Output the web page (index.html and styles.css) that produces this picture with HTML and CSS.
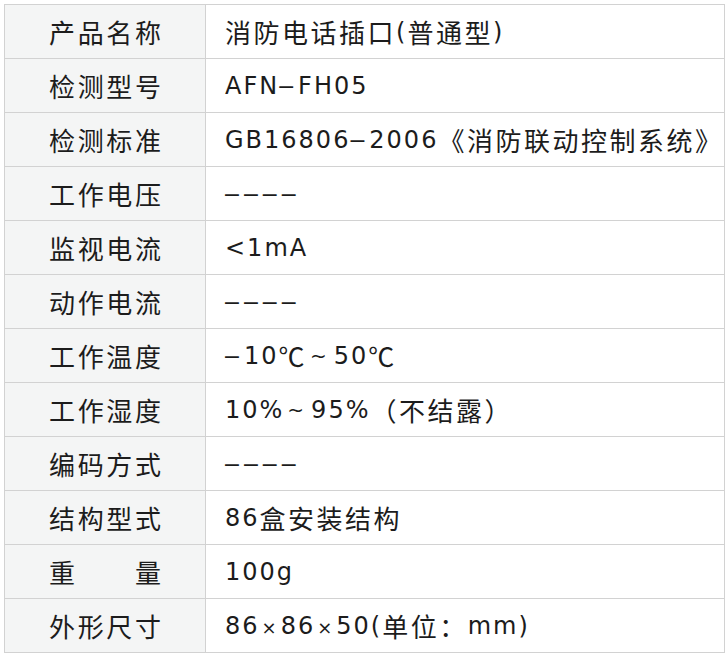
FILE: index.html
```html
<!DOCTYPE html>
<html lang="zh-CN">
<head>
<meta charset="utf-8">
<title>消防电话插口 参数</title>
<link rel="stylesheet" href="styles.css">
</head>
<body>
<div class="spec">
  <div class="label"><span class="lt">产品名称</span></div>
  <div class="value">消防电话插口<span class="lat">(</span>普通型<span class="lat">)</span></div>

  <div class="label"><span class="lt">检测型号</span></div>
  <div class="value"><span class="lat">AFN<span class="dash">–</span>FH05</span></div>

  <div class="label"><span class="lt">检测标准</span></div>
  <div class="value"><span class="lat">GB16806<span class="dash">–</span>2006</span>《消防联动控制系统》</div>

  <div class="label"><span class="lt">工作电压</span></div>
  <div class="value"><span class="dash">––––</span></div>

  <div class="label"><span class="lt">监视电流</span></div>
  <div class="value"><span class="lat">&lt;1mA</span></div>

  <div class="label"><span class="lt">动作电流</span></div>
  <div class="value"><span class="dash">––––</span></div>

  <div class="label"><span class="lt">工作温度</span></div>
  <div class="value"><span class="lat"><span class="dash">–</span>10</span>℃<span class="lat tilde">~</span><span class="lat">50</span>℃</div>

  <div class="label"><span class="lt">工作湿度</span></div>
  <div class="value"><span class="lat">10%</span><span class="lat tilde">~</span><span class="lat">95%</span>（不结露）</div>

  <div class="label"><span class="lt">编码方式</span></div>
  <div class="value"><span class="dash">––––</span></div>

  <div class="label"><span class="lt">结构型式</span></div>
  <div class="value"><span class="lat">86</span>盒安装结构</div>

  <div class="label"><span class="lt">重量</span></div>
  <div class="value"><span class="lat">100g</span></div>

  <div class="label"><span class="lt">外形尺寸</span></div>
  <div class="value"><span class="lat">86<span class="times">×</span>86<span class="times">×</span>50(</span>单位：<span class="lat">mm)</span></div>
</div>
</body>
</html>
```

FILE: styles.css
```css
html, body {
  margin: 0;
  padding: 0;
  background: #ffffff;
}

body {
  padding: 4px;
  font-family: "Noto Sans CJK SC", "Noto Sans", sans-serif;
  color: #1c1c1c;
}

.spec {
  display: grid;
  grid-template-columns: 201px 519px;
  border-top: 1px solid #d2d2d2;
  border-left: 1px solid #d2d2d2;
  width: 720px;
}

.label,
.value {
  height: 53px;
  border-right: 1px solid #d2d2d2;
  border-bottom: 1px solid #d2d2d2;
  display: flex;
  align-items: center;
}

.label {
  background: #f4f5f5;
  justify-content: center;
}

.lt {
  display: block;
  width: 112px;
  font-size: 26px;
  line-height: 1;
  text-align: justify;
  text-align-last: justify;
}

.value {
  padding-left: 19px;
  font-size: 26px;
  letter-spacing: 2.5px;
  white-space: nowrap;
}

.lat {
  font-family: "DejaVu Sans", sans-serif;
  font-size: 24px;
  letter-spacing: 2px;
}

.dash {
  font-family: "Liberation Sans", sans-serif;
  font-size: 25px;
  letter-spacing: 5px;
}

.tilde {
  font-size: 20px;
  padding: 0 5px 0 3px;
}

.times {
  font-size: 18px;
  padding: 0 2px;
}
```
